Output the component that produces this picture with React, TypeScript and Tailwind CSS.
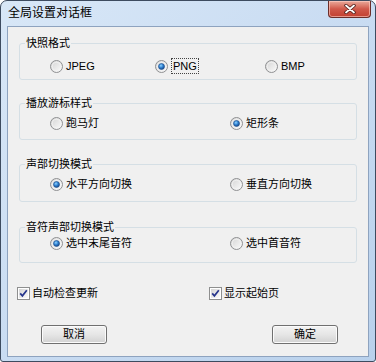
import * as React from "react";

const FONT = { fontFamily: '"Liberation Sans", "Noto Sans CJK SC", sans-serif' };

function RadioMark({ checked }: { checked?: boolean }) {
  return (
    <svg width="13" height="13" viewBox="0 0 13 13" className="shrink-0">
      <defs>
        <linearGradient id="rg-fill" x1="0" y1="0" x2="1" y2="1">
          <stop offset="0" stopColor="#d2d2d2" />
          <stop offset="1" stopColor="#fdfdfd" />
        </linearGradient>
        <radialGradient id="rg-dot" cx="0.4" cy="0.35" r="0.7">
          <stop offset="0" stopColor="#8fd3ff" />
          <stop offset="0.5" stopColor="#2f80d0" />
          <stop offset="1" stopColor="#123f7c" />
        </radialGradient>
      </defs>
      <circle cx="6.5" cy="6.5" r="6" fill="url(#rg-fill)" stroke="#8f9092" strokeWidth="1" />
      <circle cx="6.5" cy="6.5" r="4.3" fill="none" stroke="#f4f4f4" strokeWidth="0.8" />
      {checked && <circle cx="6.5" cy="6.5" r="3" fill="url(#rg-dot)" stroke="#1d4f8f" strokeWidth="0.6" />}
    </svg>
  );
}

function CheckMark() {
  return (
    <svg width="13" height="13" viewBox="0 0 13 13" className="shrink-0">
      <defs>
        <linearGradient id="cb-fill" x1="0" y1="0" x2="1" y2="1">
          <stop offset="0" stopColor="#d4d4d4" />
          <stop offset="1" stopColor="#fbfbfb" />
        </linearGradient>
      </defs>
      <rect x="0.5" y="0.5" width="12" height="12" fill="#ffffff" stroke="#8e8f8f" />
      <rect x="2" y="2" width="9" height="9" fill="url(#cb-fill)" />
      <path d="M3.2 6.4 L5.4 8.9 L9.8 3.3" fill="none" stroke="#26358c" strokeWidth="1.7" />
    </svg>
  );
}

function Radio({ label, checked, focused }: { label: string; checked?: boolean; focused?: boolean }) {
  return (
    <span className="inline-flex items-center gap-[3px] leading-[16px]">
      <RadioMark checked={checked} />
      {focused ? (
        <span className="border border-dotted border-[#444] px-[1px] leading-[14px]">{label}</span>
      ) : (
        <span>{label}</span>
      )}
    </span>
  );
}

function Group({
  title,
  height,
  padTop,
  children,
}: {
  title: string;
  height: string;
  padTop: string;
  children: React.ReactNode;
}) {
  return (
    <fieldset className={`rounded-[3px] border border-[#d5dfe5] ${height}`}>
      <legend className="ml-[5px] px-[1px] leading-[16px]">{title}</legend>
      <div className={padTop}>{children}</div>
    </fieldset>
  );
}

function Button({ label }: { label: string }) {
  return (
    <button className="flex h-[19px] w-[66px] items-center justify-center rounded-[3px] border border-[#707070] bg-gradient-to-b from-[#f3f3f3] via-[#e6e6e6] to-[#d2d2d2] text-[11px] leading-none text-black shadow-[inset_0_0_0_1px_#fbfbfb]">
      {label}
    </button>
  );
}

export default function App() {
  return (
    <div className="h-[362px] w-[376px] bg-white text-[11px] text-black" style={FONT}>
      <div className="relative flex h-full flex-col rounded-t-[7px] rounded-b-[3px] border border-[#3d4b5f] bg-gradient-to-br from-[#d8e7f7] via-[#c9dcf2] to-[#b9d1ec] px-[6px] pb-[4px]">
        {/* title bar */}
        <div className="flex h-[25px] items-center pl-[1px] pb-[2px] text-[12px]">全局设置对话框</div>
        <div className="absolute right-[4px] top-0 flex h-[17px] w-[43px] items-center justify-center rounded-b-[4px] border border-t-0 border-[#6b2e2a] bg-gradient-to-b from-[#e9a99b] via-[#d0584a] to-[#c23f30] shadow-[inset_0_0_0_1px_rgba(255,210,200,0.6)]">
          <svg width="12" height="10" viewBox="0 0 12 10">
            <path d="M2 1.5 L10 8.5 M10 1.5 L2 8.5" stroke="#4a1b17" strokeWidth="3.4" strokeLinecap="round" />
            <path d="M2 1.5 L10 8.5 M10 1.5 L2 8.5" stroke="#ffffff" strokeWidth="1.8" strokeLinecap="round" />
          </svg>
        </div>

        {/* client area */}
        <div className="flex flex-1 flex-col border border-[#8ea3bf] bg-[#f0f0f0] px-[11px]">
          <div className="mt-[8px]">
            <Group title="快照格式" height="h-[45px]" padTop="pt-[7px]">
              <div className="grid grid-cols-[105px_110px_1fr] pl-[30px]">
                <Radio label="JPEG" />
                <Radio label="PNG" checked focused />
                <Radio label="BMP" />
              </div>
            </Group>
          </div>
          <div className="mt-[15px]">
            <Group title="播放游标样式" height="h-[45px]" padTop="pt-[4px]">
              <div className="grid grid-cols-[180px_1fr] pl-[30px]">
                <Radio label="跑马灯" />
                <Radio label="矩形条" checked />
              </div>
            </Group>
          </div>
          <div className="mt-[16px]">
            <Group title="声部切换模式" height="h-[46px]" padTop="pt-[4px]">
              <div className="grid grid-cols-[180px_1fr] pl-[30px]">
                <Radio label="水平方向切换" checked />
                <Radio label="垂直方向切换" />
              </div>
            </Group>
          </div>
          <div className="mt-[17px]">
            <Group title="音符声部切换模式" height="h-[44px]" padTop="pt-0">
              <div className="grid grid-cols-[180px_1fr] pl-[30px]">
                <Radio label="选中末尾音符" checked />
                <Radio label="选中首音符" />
              </div>
            </Group>
          </div>

          <div className="mt-[22px] grid grid-cols-[190px_1fr] leading-[16px]">
            <span className="-ml-[2px] inline-flex items-center gap-[2px]">
              <CheckMark />
              自动检查更新
            </span>
            <span className="inline-flex items-center gap-[2px]">
              <CheckMark />
              显示起始页
            </span>
          </div>

          <div className="mt-[24px] flex justify-between pl-[22px] pr-[19px]">
            <Button label="取消" />
            <Button label="确定" />
          </div>
        </div>
      </div>
    </div>
  );
}
